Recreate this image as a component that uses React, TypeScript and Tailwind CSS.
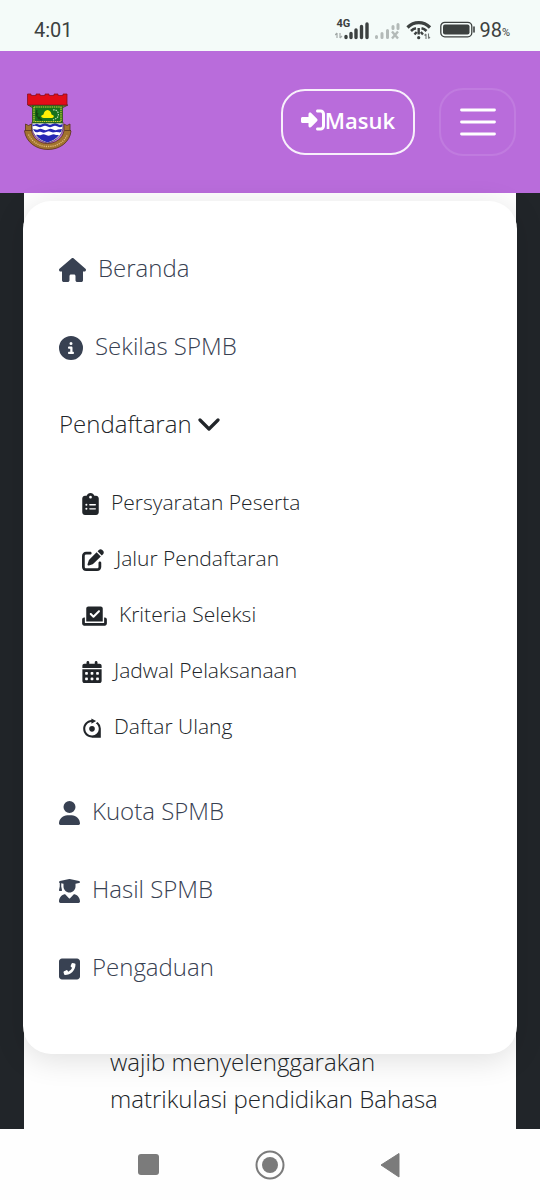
import React from "react";
import type { IconType } from "react-icons";
import {
  FaCalendarDays,
  FaCheckToSlot,
  FaCircleInfo,
  FaClipboardList,
  FaHouse,
  FaPenToSquare,
  FaRev,
  FaRightToBracket,
  FaSquarePhoneFlip,
  FaUser,
  FaUserGraduate,
} from "react-icons/fa6";

interface MenuItem {
  label: string;
  icon: IconType;
  width: string;
}

const mainLinks: MenuItem[] = [
  { label: "Beranda", icon: FaHouse, width: "w-[27px]" },
  { label: "Sekilas SPMB", icon: FaCircleInfo, width: "w-6" },
];

const subLinks: MenuItem[] = [
  { label: "Persyaratan Peserta", icon: FaClipboardList, width: "w-[17px]" },
  { label: "Jalur Pendaftaran", icon: FaPenToSquare, width: "w-[22px]" },
  { label: "Kriteria Seleksi", icon: FaCheckToSlot, width: "w-[25px]" },
  { label: "Jadwal Pelaksanaan", icon: FaCalendarDays, width: "w-5" },
  { label: "Daftar Ulang", icon: FaRev, width: "w-5" },
];

const otherLinks: MenuItem[] = [
  { label: "Kuota SPMB", icon: FaUser, width: "w-[21px]" },
  { label: "Hasil SPMB", icon: FaUserGraduate, width: "w-[21px]" },
  { label: "Pengaduan", icon: FaSquarePhoneFlip, width: "w-[21px]" },
];

const StatusBar = () => {
  return (
    <div className="flex h-[51px] items-center justify-between bg-[#f4fbf9] pt-2 pr-[30px] pl-[34px] font-['Roboto',sans-serif] text-[#3c4140]">
      <span className="text-xl">4:01</span>
      <div className="flex items-center">
        <div className="relative mr-1.5">
          <span className="absolute -top-px left-px text-[11px] leading-[10px] font-bold">
            4G
          </span>
          <svg width="34" height="20" viewBox="0 0 34 20" fill="none">
            <path d="M2 18v-5M0 15l2-2M5 13v5M7 16l-2 2" stroke="#a3aaa8" strokeWidth="1.2" />
            <path
              d="M11 17.5v-1M16 17.5v-4M21 17.5v-7.500M26.500 17.500v-11M32 17.500v-13.500"
              stroke="currentColor"
              strokeWidth="3.400"
              strokeLinecap="round"
            />
          </svg>
        </div>
        <svg className="mr-1.5" width="25" height="20" viewBox="0 0 25 20" fill="none" stroke="#b3bab8">
          <path
            d="M1.500 17.500v-1M7 17.500v-4M12.500 17.500v-7M18 8.500v-2M23 8.500v-4"
            strokeWidth="3"
            strokeLinecap="round"
          />
          <path d="M17 11.500l6 7M23 11.500l-6 7" strokeWidth="2.400" />
        </svg>
        <svg className="mr-2" width="26" height="20" viewBox="0 0 26 20" fill="none" stroke="currentColor">
          <path d="M1.500 7.500C8 1 17.500 1 24 7.500" strokeWidth="3.200" />
          <path d="M5 11c1.500-1.500 3-2.400 5-2.800M15.500 8.200c2 .4 3.500 1.300 5 2.800" strokeWidth="2.600" />
          <path d="M8.500 14.500l2.200-2.500M17 14.500l-2.200-2.500M12.700 8v6.500" strokeWidth="2.400" />
          <circle cx="12.700" cy="17.700" r="1.600" fill="currentColor" stroke="none" />
          <path d="M20 14v5M18.500 15.500l1.500-1.500M22.500 13.500v5M24 17l-1.500 1.500" stroke="#737977" strokeWidth="1.100" />
        </svg>
        <svg className="mr-1" width="35" height="18" viewBox="0 0 35 18" fill="none">
          <rect x=".8" y="1.300" width="31" height="14.500" rx="4" stroke="currentColor" strokeWidth="1.300" />
          <rect x="3" y="3.500" width="26.500" height="10" rx="2" fill="currentColor" />
          <path d="M34 6v5" stroke="currentColor" strokeWidth="1.600" strokeLinecap="round" />
        </svg>
        <span className="text-xl">98</span>
        <span className="pt-1.5 text-[11px] leading-3">%</span>
      </div>
    </div>
  );
};

// city coat of arms
const Logo = () => {
  return (
    <svg width="48" height="58" viewBox="0 0 48 58" fill="none">
      <path d="M4 12 9 15v22h29V15l6-3z" fill="#6d8a35" stroke="#3d3a1c" strokeWidth=".8" />
      <path
        d="M3.500 1h3.500v1.500h5V1h4v1.500h5V1h4v1.500h5V1h4v1.500h5V1h4v11h-39.500z"
        fill="#e30d18"
        stroke="#8a1020"
        strokeWidth=".8"
      />
      <path d="M8 29h31v5c0 8-7 14-15.500 16C15 48 8 42 8 34z" fill="#fff" stroke="#4c3a54" strokeWidth=".8" />
      <path d="M8.500 31c2 2 3-1 5 0s3 1 5 0 3-1 5 0 3 1 5 0 3-1 5 0 3 1 5 0v2.500c-2 1-3 1-5 0s-3-1-5 0-3 1-5 0-3-1-5 0-3 1-5 0-3-1-5 0z" fill="#2527b4" />
      <path d="M9 36.500c2-1 3 1 5 0s3-1 5 0 3 1 5 0 3-1 5 0 3 1 5 0l4-.5-.8 3c-2 1-3 0-5 0s-3 1-5 0-3-1-5 0-3 1-5 0-3 1-6 0z" fill="#2527b4" />
      <path d="M12 42c2-1 3 1 5 0s3-1 5 0 3 1 5 0 3-1 5 0l3 0C32 46 28 48 23.500 49.500 19 48 15 46 12 42z" fill="#2527b4" />
      <rect x="8.500" y="12.500" width="30" height="17.500" fill="#16711c" stroke="#3d5a1c" strokeWidth=".8" />
      <rect x="10" y="14" width="27" height="14.500" stroke="#d5cf35" strokeWidth="1.200" strokeDasharray="1.500 .7" />
      <path d="M23.500 17c2.500 0 3.500 2.200 4 4.500l2 1c1 2-1 2.500-2.500 2.500h-7c-2 0-3.500-1-2.500-2.500l2-1c.5-2.300 1.500-4.500 4-4.500z" fill="#ffef05" />
      <path d="M13 17c-2 4 0 8 5 10M14 20l-2 3M16 24l-2 2" stroke="#164611" strokeWidth="1.500" />
      <path d="M29 17c5-1 7 5 4 8l-4 2" stroke="#b8d9b5" strokeWidth="1.200" strokeDasharray="1.500 1" />
      <path
        d="M1.500 31l3 1.500L7.500 31v7c2 8 8.500 12.500 16 12.500S38.500 46 40 38v-7l3 1.500 3-1.500v6l1 1C46 49 36 56.500 24 56.500S2 49 .5 38l1-1z"
        fill="#a2732f"
        stroke="#57321d"
        strokeWidth=".8"
      />
      <path d="M4.500 41.500c4 8 11 12 19.500 12s16-4 19.500-12" stroke="#e0bd79" strokeWidth="1.300" strokeDasharray="1.200 1" />
      <path d="M.8 37.500h6.500M40.500 37.500h6.500" stroke="#57321d" strokeWidth=".8" />
    </svg>
  );
};

const Header = () => {
  return (
    <header className="flex h-[142px] items-center justify-between bg-[#b96cdb] px-6">
      <a href="#" aria-label="SPMB">
        <Logo />
      </a>
      <div className="flex items-center gap-6">
        <button className="flex h-[66px] items-center rounded-3xl border-2 border-white/90 px-[18px] pb-1 text-[22px] font-semibold text-white">
          <FaRightToBracket className="h-6 w-6" />
          Masuk
        </button>
        <button
          aria-label="Menu"
          className="flex h-[68px] w-[77px] items-center justify-center rounded-3xl border-2 border-white/10"
        >
          <svg width="36" height="28" viewBox="0 0 36 28">
            <path d="M1.500 2h33M1.500 14h33M1.500 26h33" stroke="white" strokeWidth="2.800" strokeLinecap="round" />
          </svg>
        </button>
      </div>
    </header>
  );
};

const MenuLink = ({ label, icon: Icon, width }: MenuItem) => {
  return (
    <a href="#" className="flex h-[78px] items-center gap-3 text-2xl font-light text-[#384152]">
      <Icon className={`mt-1 h-6 ${width}`} />
      {label}
    </a>
  );
};

const Menu = () => {
  return (
    <nav className="z-10 col-start-1 row-start-1 mx-[23px] mt-2 mb-[75px] rounded-[28px] bg-white px-9 pt-7 pb-12 shadow-[0_6px_30px_rgba(0,0,0,0.12)]">
      {mainLinks.map((link) => (
        <MenuLink key={link.label} {...link} />
      ))}
      <button className="flex h-[78px] items-center gap-1.5 text-2xl font-light text-[#212529]">
        Pendaftaran
        <svg width="22" height="24" viewBox="0 0 22 24" fill="none">
          <path
            d="M2 8l9 9 9-9"
            stroke="currentColor"
            strokeWidth="3.200"
            strokeLinecap="round"
            strokeLinejoin="round"
          />
        </svg>
      </button>
      <ul className="mt-3 mb-[17px] pl-[23px]">
        {subLinks.map(({ label, icon: Icon, width }) => (
          <li key={label}>
            <a href="#" className="flex h-14 items-center gap-3 text-[21px] font-light text-[#212529]">
              <Icon className={`mt-0.5 h-[22px] ${width}`} />
              {label}
            </a>
          </li>
        ))}
      </ul>
      {otherLinks.map((link) => (
        <MenuLink key={link.label} {...link} />
      ))}
    </nav>
  );
};

const SystemNav = () => {
  return (
    <div className="flex h-[71px] items-center justify-center gap-[92px] bg-[#fefefe] text-[#7b7b7b]">
      <button aria-label="Recent apps">
        <svg width="30" height="30" viewBox="0 0 30 30" fill="currentColor">
          <rect x="5" y="4" width="21" height="21" rx="3" />
        </svg>
      </button>
      <button aria-label="Home">
        <svg width="30" height="30" viewBox="0 0 30 30" fill="currentColor">
          <circle cx="15" cy="15" r="13.500" fill="none" stroke="currentColor" strokeWidth="2" />
          <circle cx="15" cy="15" r="8" />
        </svg>
      </button>
      <button aria-label="Back">
        <svg width="30" height="30" viewBox="0 0 30 30" fill="currentColor">
          <path d="M22 3.500v23.500L4 15z" stroke="currentColor" strokeLinejoin="round" />
        </svg>
      </button>
    </div>
  );
};

export default function App() {
  return (
    <div className="bg-[#212529] font-['Open_Sans',sans-serif]">
      <StatusBar />
      <Header />
      <main className="grid">
        <article className="col-start-1 row-start-1 mx-6 flex items-end bg-[#fefefe] pr-16 pb-3 pl-[86px]">
          <p className="text-2xl leading-[37px] font-light text-[#212529]">
            wajib menyelenggarakan matrikulasi pendidikan Bahasa
          </p>
        </article>
        <Menu />
      </main>
      <SystemNav />
    </div>
  );
}
